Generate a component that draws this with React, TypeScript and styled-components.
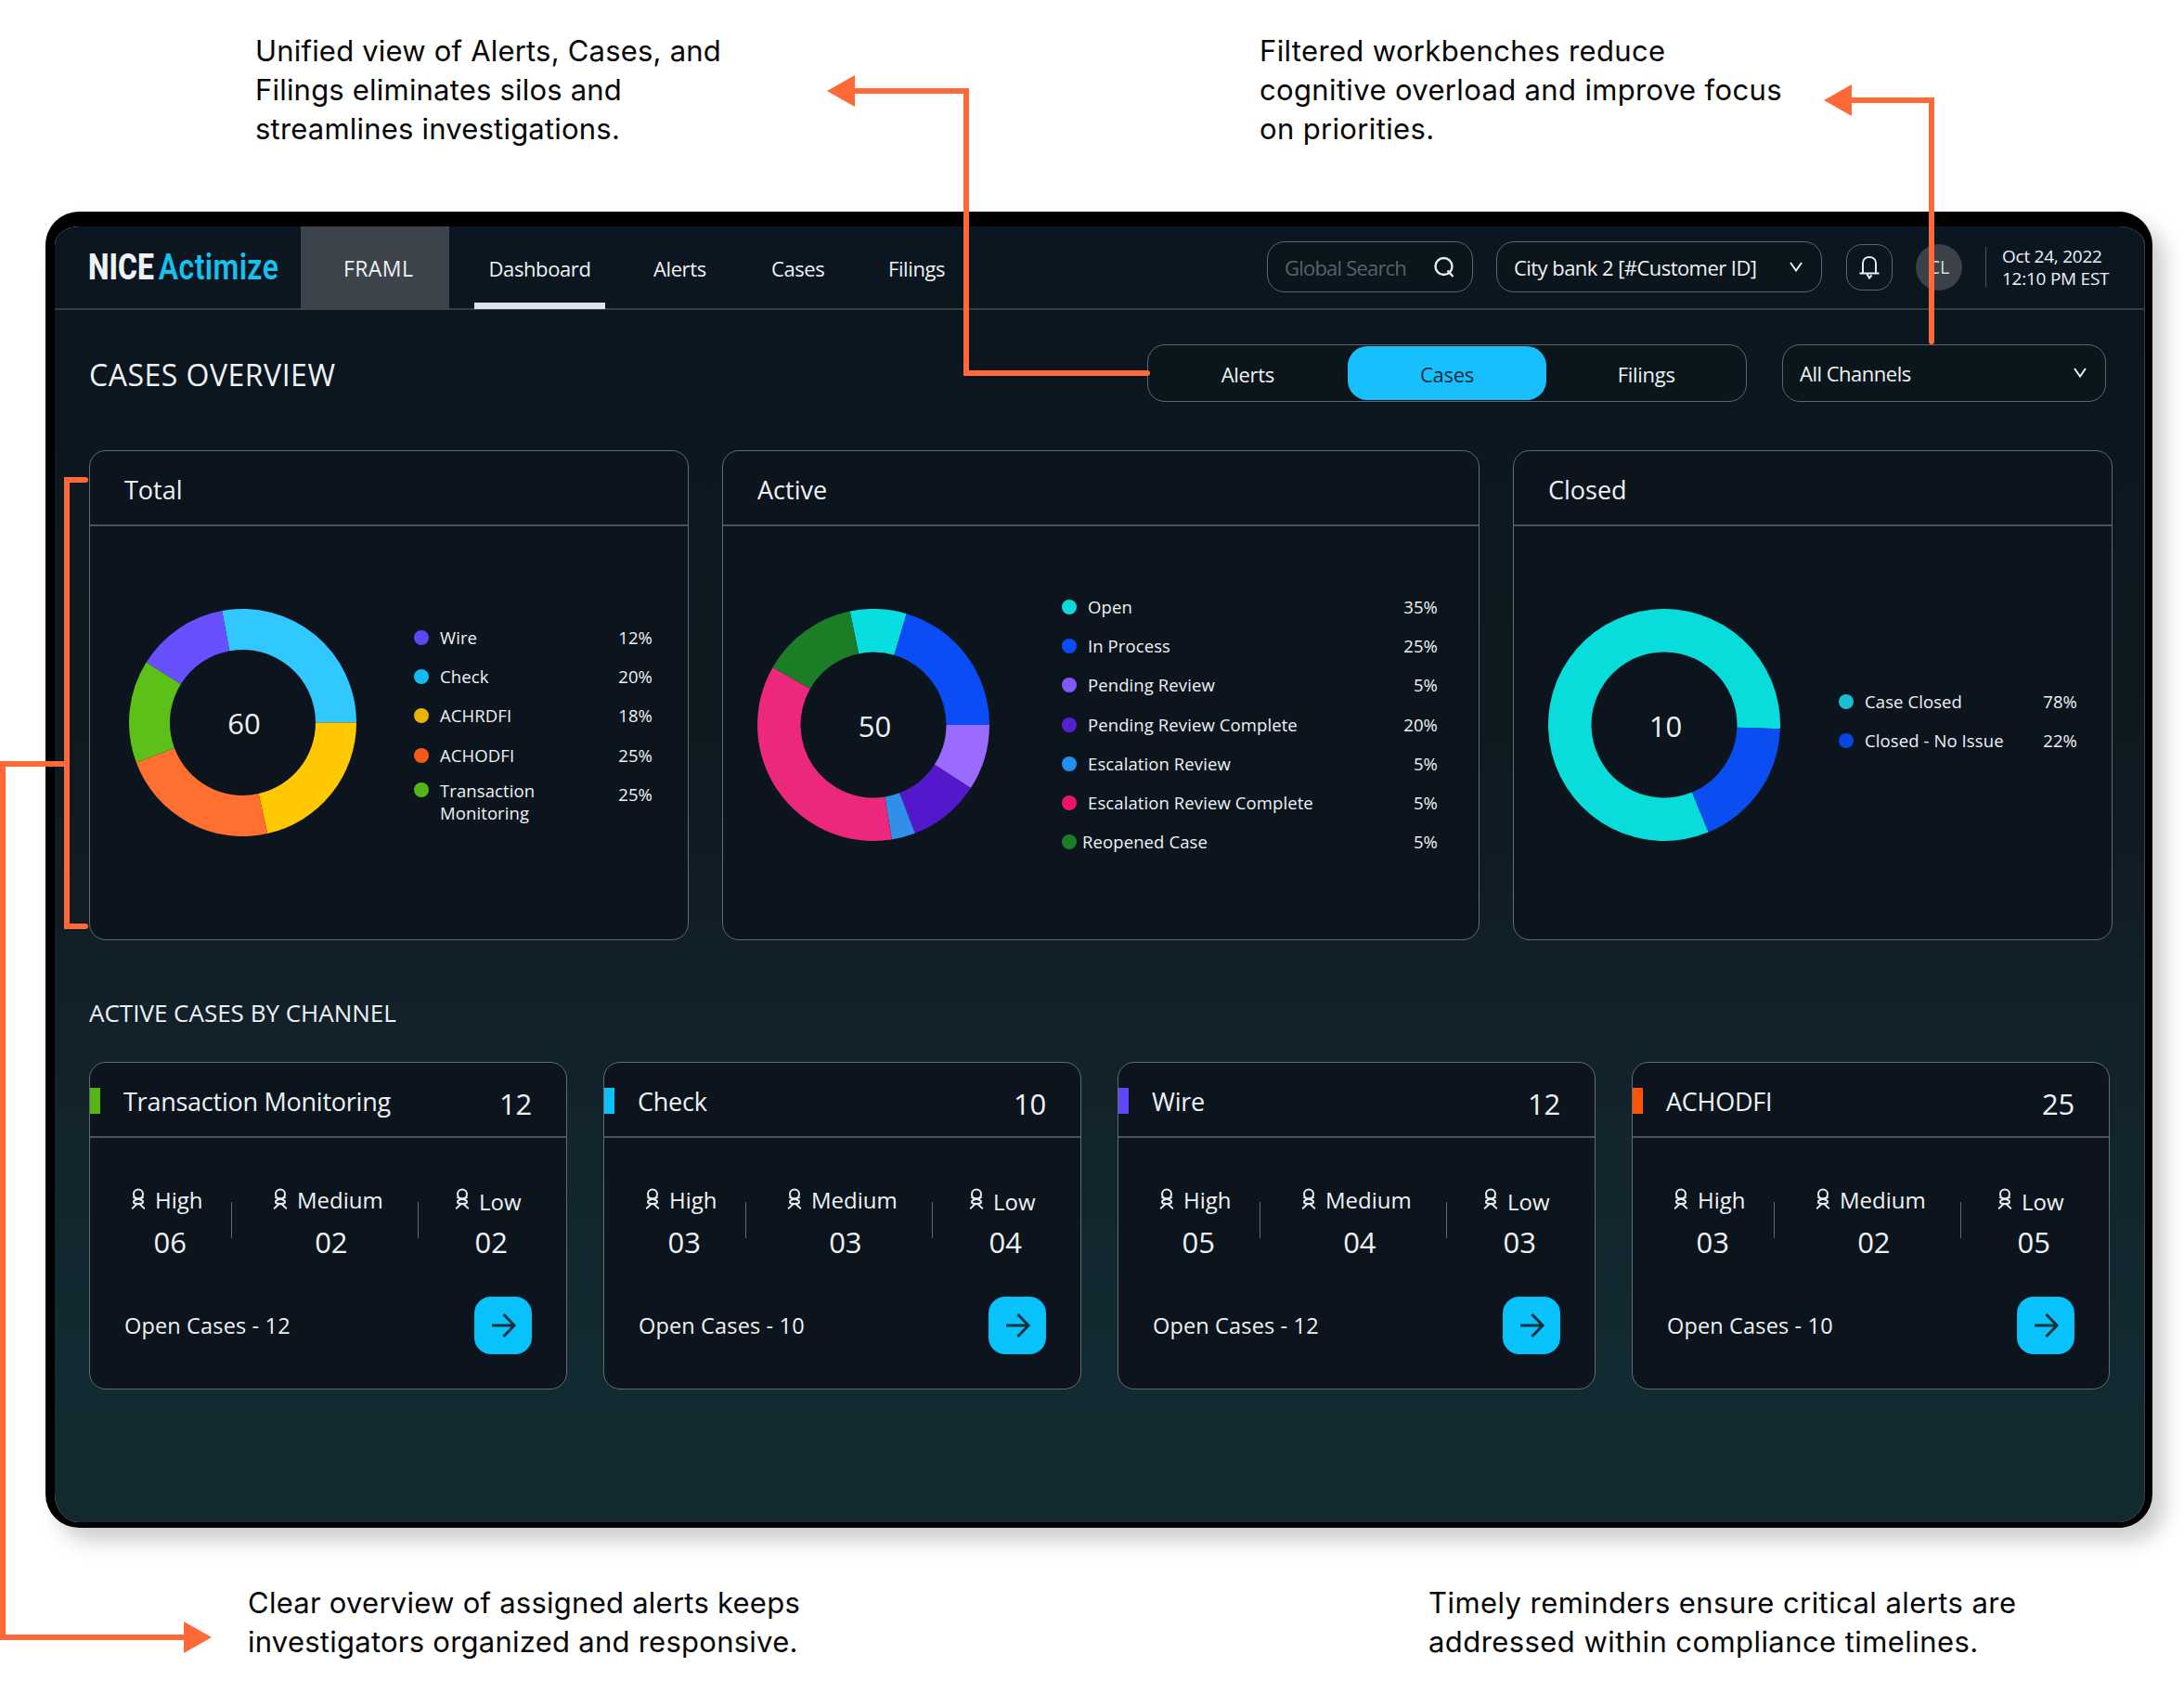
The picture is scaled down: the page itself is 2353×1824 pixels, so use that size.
import React, { useState } from "react";
import styled, { createGlobalStyle } from "styled-components";

const GlobalStyle = createGlobalStyle`
  * {
    box-sizing: border-box;
  }

  body {
    margin: 0;
    background: #fff;
    font-family: "Open Sans", "Noto Sans", sans-serif;
  }

  button {
    font: inherit;
    border: 0;
    padding: 0;
    background: none;
    color: inherit;
    cursor: pointer;
  }
`;

const Page = styled.div`
  position: relative;
  width: 2353px;
  height: 1824px;
  overflow: hidden;
  background: #fff;
`;

const CalloutRow = styled.div<{ $height: number; $top: number; $left: number }>`
  display: flex;
  height: ${({ $height }) => $height}px;
  padding: ${({ $top, $left }) => `${$top}px 0 0 ${$left}px`};
`;

const Callout = styled.p<{ $width: number; $spacing: number }>`
  width: ${({ $width }) => $width}px;
  margin: 0;
  color: #050505;
  font-family: Inter, sans-serif;
  font-size: 31px;
  line-height: 42px;
  letter-spacing: ${({ $spacing }) => $spacing}px;
  white-space: pre-line;
`;

const Frame = styled.div`
  width: 2270px;
  height: 1418px;
  margin-left: 49px;
  border: solid #000;
  border-width: 16px 8px 6px 10px;
  border-radius: 36px;
  background: linear-gradient(180deg, #0a1621 0%, #0c161e 10%, #0e1920 40%, #12212a 62%, #122a31 88%, #12292f 100%);
  background-clip: padding-box;
  box-shadow: 13px 14px 22px rgba(0, 0, 0, 0.2), inset -1px 0 0 #3a4247;
  color: #eef2f5;
`;

const Header = styled.header`
  display: flex;
  align-items: stretch;
  height: 90px;
  padding-left: 36px;
  padding-right: 39px;
  border-bottom: 2px solid #333d44;
`;

const Logo = styled.div`
  width: 229px;
  font-family: Roboto, sans-serif;
  font-size: 38px;
  font-weight: 800;
  line-height: 88px;
  white-space: nowrap;
`;

const LogoText = styled.div`
  transform: scaleX(0.84);
  transform-origin: left;

  span {
    margin-left: 6px;
    color: #16c1ee;
    font-weight: 600;
    letter-spacing: 0.5px;
  }
`;

const Product = styled.div`
  width: 160px;
  height: 90px;
  padding-left: 46px;
  background: #3d434b;
  font-size: 23px;
  line-height: 90px;
  letter-spacing: 0.4px;
`;

const Nav = styled.nav`
  display: flex;
  margin-left: 27px;
`;

const NavItem = styled.a<{ $width: number; $active?: boolean }>`
  width: ${({ $width }) => $width}px;
  height: 89px;
  margin-right: ${({ $active }) => ($active ? 52 : 0)}px;
  border-bottom: 7px solid ${({ $active }) => ($active ? "#dfe4ec" : "transparent")};
  font-size: 22px;
  line-height: 90px;
  letter-spacing: -0.4px;
  text-align: ${({ $active }) => ($active ? "center" : "left")};
`;

const Tools = styled.div`
  display: flex;
  align-items: center;
  height: 87px;
  margin-left: auto;
`;

const Field = styled.div<{ $width: number; $height: number; $spacing: number }>`
  display: flex;
  align-items: center;
  justify-content: space-between;
  width: ${({ $width }) => $width}px;
  height: ${({ $height }) => $height}px;
  padding: 0 19px 0 18px;
  border: 1px solid #5c676d;
  border-radius: 19px;
  background: #0b151c;
  font-size: 22px;
  letter-spacing: ${({ $spacing }) => $spacing}px;
  white-space: nowrap;

  & + & {
    margin-left: 25px;
  }
`;

const Placeholder = styled.span`
  color: #56626b;
`;

const BellButton = styled.button`
  display: grid;
  place-items: center;
  width: 50px;
  height: 50px;
  margin: 0 25px 0 26px;
  border: 1px solid #5c676d;
  border-radius: 17px;
`;

const Avatar = styled.div`
  width: 50px;
  height: 50px;
  border-radius: 50%;
  background: #3b4146;
  color: #d4d8db;
  font-size: 20px;
  line-height: 50px;
  text-align: center;
`;

const Timestamp = styled.div`
  width: 133px;
  height: 44px;
  margin-left: 25px;
  padding-left: 17px;
  border-left: 1px solid #4a545a;
  font-size: 19px;
  line-height: 24px;
  letter-spacing: -0.25px;
  white-space: nowrap;

  div:first-child {
    margin-top: -2px;
  }
`;

const Toolbar = styled.div`
  display: flex;
  align-items: center;
  height: 62px;
  margin: 37px 42px 0 37px;
`;

const Title = styled.h1`
  margin: 0 auto 0 0;
  padding-top: 2px;
  font-size: 32px;
  font-weight: 400;
  letter-spacing: 0.5px;
`;

const Tabs = styled.div`
  display: flex;
  align-items: center;
  width: 646px;
  height: 62px;
  margin-right: 38px;
  border: 1px solid #5c676d;
  border-radius: 19px;
  background: #0b151c;
`;

const Tab = styled.button<{ $active: boolean }>`
  flex: 1;
  height: 58px;
  padding-top: 2px;
  border-radius: 21px;
  background: ${({ $active }) => ($active ? "#17c0fd" : "transparent")};
  color: ${({ $active }) => ($active ? "#0d2a38" : "#eef2f5")};
  font-size: 22px;
  letter-spacing: -0.3px;
`;

const ChartGrid = styled.div`
  display: grid;
  grid-template-columns: 646px 816px 646px;
  gap: 36px;
  margin: 52px 0 0 37px;
`;

const Card = styled.section<{ $height: number }>`
  height: ${({ $height }) => $height}px;
  border: 1px solid #616c72;
  border-radius: 18px;
  background: #0c151d;
`;

const CardHeader = styled.div<{ $spacing?: number }>`
  display: flex;
  align-items: center;
  height: 81px;
  padding: 3px 37px 0;
  border-bottom: 2px solid #4a555b;
  font-size: 27px;
  letter-spacing: ${({ $spacing = 0 }) => $spacing}px;
`;

const ChartBody = styled.div<{ $left: number; $gap: number }>`
  display: flex;
  align-items: flex-start;
  gap: ${({ $gap }) => $gap}px;
  padding-left: ${({ $left }) => $left}px;
`;

const DonutBox = styled.div`
  position: relative;
  margin-top: 89px;

  svg {
    display: block;
  }
`;

const DonutValue = styled.div`
  position: absolute;
  inset: 1px 0 0 3px;
  display: grid;
  place-items: center;
  font-size: 31px;
`;

const Legend = styled.ul<{ $top: number; $width: number }>`
  width: ${({ $width }) => $width}px;
  margin: ${({ $top }) => $top}px 0 0;
  padding: 0;
  list-style: none;
`;

const LegendItem = styled.li<{ $tight?: boolean; $multiline?: boolean }>`
  display: grid;
  grid-template-columns: ${({ $tight }) => ($tight ? 22 : 28)}px 1fr auto;
  align-items: ${({ $multiline }) => ($multiline ? "start" : "center")};
  min-height: 42.2px;
  padding-top: ${({ $multiline }) => ($multiline ? 5 : 0)}px;
  font-size: 18.5px;
  line-height: 24px;
  letter-spacing: 0.1px;
  white-space: pre-line;
`;

const Dot = styled.span<{ $color: string; $multiline?: boolean }>`
  width: 16px;
  height: 16px;
  margin-top: ${({ $multiline }) => ($multiline ? 3 : 0)}px;
  border-radius: 50%;
  background: ${({ $color }) => $color};
`;

const Percent = styled.span<{ $multiline?: boolean }>`
  margin-top: ${({ $multiline }) => ($multiline ? 4 : 0)}px;
`;

const SectionTitle = styled.h2`
  height: 40px;
  margin: 58px 0 33px 37px;
  font-size: 26px;
  font-weight: 400;
  line-height: 40px;
  letter-spacing: 0;
`;

const ChannelGrid = styled.div`
  display: grid;
  grid-template-columns: repeat(4, 515px);
  column-gap: 39px;
  margin-left: 37px;
`;

const Marker = styled.span<{ $color: string }>`
  width: 11px;
  height: 28px;
  margin-left: -37px;
  margin-right: 25px;
  background: ${({ $color }) => $color};
`;

const Count = styled.span`
  margin-left: auto;
  padding-top: 6px;
  font-size: 31px;
`;

const Stats = styled.div`
  display: grid;
  grid-template-columns: 153px 201px 1fr;
  height: 116px;
  margin-top: 50px;
`;

const Stat = styled.div`
  position: relative;
  padding-left: 44px;

  & + &::before {
    content: "";
    position: absolute;
    left: -1px;
    top: 19px;
    width: 1px;
    height: 39px;
    background: #5f6a71;
  }

  &:last-child {
    padding-left: 39px;
  }
`;

const StatInner = styled.div`
  display: inline-block;
`;

const StatLabel = styled.div<{ $drop?: boolean }>`
  display: flex;
  align-items: flex-start;
  gap: 10px;
  height: 36px;
  font-size: 24px;
  line-height: 34px;

  span {
    margin-top: ${({ $drop }) => ($drop ? 2 : 0)}px;
  }

  svg {
    margin-top: 4px;
  }
`;

const StatValue = styled.div`
  padding-left: 7px;
  margin-top: 5px;
  font-size: 31px;
  line-height: 42px;
  text-align: center;
`;

const CardFooter = styled.div`
  display: flex;
  align-items: center;
  justify-content: space-between;
  height: 62px;
  margin-top: 5px;
  padding: 0 37px;
  font-size: 23.500px;
  letter-spacing: 0.15px;
`;

const OpenButton = styled.button`
  display: grid;
  place-items: center;
  width: 62px;
  height: 62px;
  border-radius: 18px;
  background: #08c2fc;
`;

const Arrows = styled.svg`
  position: absolute;
  inset: 0;
  pointer-events: none;
`;

type Slice = { from: number; to: number; color: string };
type LegendRow = { label: string; value: string; color: string; tight?: boolean };

type Chart = {
  title: string;
  total: number;
  size: number;
  left: number;
  gap: number;
  legendTop: number;
  legendWidth: number;
  slices: Slice[];
  legend: LegendRow[];
};

// slice angles are in degrees, clockwise from the top
const charts: Chart[] = [
  {
    title: "Total",
    total: 60,
    size: 245,
    left: 42,
    gap: 62,
    legendTop: 99,
    legendWidth: 257,
    slices: [
      { from: -10.5, to: 90, color: "#30c8ff" },
      { from: 90, to: 167.4, color: "#ffc800" },
      { from: 167.4, to: 249.5, color: "#ff7030" },
      { from: 249.5, to: 302, color: "#5cc018" },
      { from: 302, to: 349.5, color: "#6850ff" },
    ],
    legend: [
      { label: "Wire", value: "12%", color: "#5b48f5" },
      { label: "Check", value: "20%", color: "#12bcf2" },
      { label: "ACHRDFI", value: "18%", color: "#e8b208" },
      { label: "ACHODFI", value: "25%", color: "#f55a1a" },
      { label: "Transaction\nMonitoring", value: "25%", color: "#55b41a" },
    ],
  },
  {
    title: "Active",
    total: 50,
    size: 250,
    left: 37,
    gap: 78,
    legendTop: 66,
    legendWidth: 405,
    slices: [
      { from: -11.7, to: 16.6, color: "#08dedf" },
      { from: 16.6, to: 90, color: "#0a4cf5" },
      { from: 90, to: 123, color: "#9b6bff" },
      { from: 123, to: 159, color: "#5318cc" },
      { from: 159, to: 170.9, color: "#328fe8" },
      { from: 170.9, to: 299.8, color: "#eb287c" },
      { from: 299.8, to: 348.3, color: "#1b7d25" },
    ],
    legend: [
      { label: "Open", value: "35%", color: "#12d6d8" },
      { label: "In Process", value: "25%", color: "#0a4cf5" },
      { label: "Pending Review", value: "5%", color: "#7d5bf8" },
      { label: "Pending Review Complete", value: "20%", color: "#5520d0" },
      { label: "Escalation Review", value: "5%", color: "#2090f0" },
      { label: "Escalation Review Complete", value: "5%", color: "#ea146c" },
      { label: "Reopened Case", value: "5%", color: "#1b7d25", tight: true },
    ],
  },
  {
    title: "Closed",
    total: 10,
    size: 250,
    left: 37,
    gap: 63,
    legendTop: 168,
    legendWidth: 257,
    slices: [
      { from: -202.4, to: 92, color: "#08dddc" },
      { from: 92, to: 157.6, color: "#0a4ef2" },
    ],
    legend: [
      { label: "Case Closed", value: "78%", color: "#18bfd0" },
      { label: "Closed - No Issue", value: "22%", color: "#0a45e0" },
    ],
  },
];

const channels = [
  { name: "Transaction Monitoring", count: 12, color: "#52b415", stats: ["06", "02", "02"], open: 12 },
  { name: "Check", count: 10, color: "#0cc0fa", stats: ["03", "03", "04"], open: 10 },
  { name: "Wire", count: 12, color: "#6246fa", stats: ["05", "04", "03"], open: 12 },
  { name: "ACHODFI", count: 25, color: "#fc5508", stats: ["03", "02", "05"], open: 10 },
];

const levels = ["High", "Medium", "Low"];

function slicePath(from: number, to: number, c: number, outer: number, inner: number) {
  const point = (deg: number, r: number) => {
    const rad = (deg * Math.PI) / 180;
    return `${(c + r * Math.sin(rad)).toFixed(2)} ${(c - r * Math.cos(rad)).toFixed(2)}`;
  };
  const large = to - from > 180 ? 1 : 0;
  return [
    `M${point(from, outer)}`,
    `A${outer} ${outer} 0 ${large} 1 ${point(to, outer)}`,
    `L${point(to, inner)}`,
    `A${inner} ${inner} 0 ${large} 0 ${point(from, inner)}Z`,
  ].join(" ");
}

const Donut = ({ size, slices, total }: { size: number; slices: Slice[]; total: number }) => (
  <DonutBox>
    <svg width={size} height={size}>
      {slices.map((s) => (
        <path key={s.color} d={slicePath(s.from, s.to, size / 2, size / 2, 78.5)} fill={s.color} />
      ))}
    </svg>
    <DonutValue>{total}</DonutValue>
  </DonutBox>
);

const Chevron = () => (
  <svg width="16" height="12" viewBox="0 0 16 12" fill="none" stroke="#e8edf0" strokeWidth="2">
    <path d="M2 1 8 9.5 14 1" />
  </svg>
);

const SearchIcon = () => (
  <svg width="22" height="24" viewBox="0 0 22 24" fill="none" stroke="#e8edf0" strokeWidth="2.4">
    <circle cx="10.5" cy="11" r="9" />
    <path d="M14.5 15.5 20.5 22" />
  </svg>
);

const BellIcon = () => (
  <svg width="24" height="28" viewBox="0 0 24 28" fill="none" stroke="#e8edf0" strokeWidth="2">
    <path d="M5 20V9.500C5 5.500 8 3 12 3s7 2.500 7 6.500V20" />
    <path d="M1.500 20.500h21M9.500 21.500l2.500 4 2.500-3" />
  </svg>
);

const PersonIcon = () => (
  <svg width="16" height="23" viewBox="0 0 16 23" fill="none" stroke="#e8edf0" strokeWidth="2">
    <circle cx="8" cy="6.500" r="5" />
    <path d="M2.500 9.500C4.500 12.500 12 11 13 14.500c.5 2-2 2.500-5 2.500s-5.500-.5-5-2.500C4 11 11.500 12.500 13.500 9.500" />
    <path d="M1 22C4 21 4.500 17 8 17s4 4 7 5" />
  </svg>
);

const ArrowIcon = () => (
  <svg width="30" height="30" viewBox="0 0 30 30" fill="none" stroke="#12303c" strokeWidth="3">
    <path d="M3 15h24M15.500 3 27 15 15.500 27" />
  </svg>
);

export default function App() {
  const [tab, setTab] = useState("Cases");

  return (
    <Page>
      <GlobalStyle />

      <CalloutRow $height={228} $top={34} $left={275}>
        <Callout $width={1082} $spacing={0.2}>
          {"Unified view of Alerts, Cases, and\nFilings eliminates silos and\nstreamlines investigations."}
        </Callout>
        <Callout $width={700} $spacing={0.35}>
          {"Filtered workbenches reduce\ncognitive overload and improve focus\non priorities."}
        </Callout>
      </CalloutRow>

      <Frame>
        <Header>
          <Logo>
            <LogoText>NICE<span>Actimize</span></LogoText>
          </Logo>
          <Product>FRAML</Product>
          <Nav>
            <NavItem $width={141} $active>Dashboard</NavItem>
            <NavItem $width={127}>Alerts</NavItem>
            <NavItem $width={126}>Cases</NavItem>
            <NavItem $width={70}>Filings</NavItem>
          </Nav>
          <Tools>
            <Field $width={222} $height={55} $spacing={-0.8}>
              <Placeholder>Global Search</Placeholder>
              <SearchIcon />
            </Field>
            <Field $width={351} $height={55} $spacing={-0.55}>
              City bank 2 [#Customer ID]
              <Chevron />
            </Field>
            <BellButton><BellIcon /></BellButton>
            <Avatar>CL</Avatar>
            <Timestamp>
              <div>Oct 24, 2022</div>
              <div>12:10 PM EST</div>
            </Timestamp>
          </Tools>
        </Header>

        <Toolbar>
          <Title>CASES OVERVIEW</Title>
          <Tabs>
            {["Alerts", "Cases", "Filings"].map((name) => (
              <Tab key={name} $active={tab === name} onClick={() => setTab(name)}>{name}</Tab>
            ))}
          </Tabs>
          <Field as="div" $width={349} $height={62} $spacing={-0.5}>
            All Channels
            <Chevron />
          </Field>
        </Toolbar>

        <ChartGrid>
          {charts.map((chart) => (
            <Card key={chart.title} $height={528}>
              <CardHeader>{chart.title}</CardHeader>
              <ChartBody $left={chart.left} $gap={chart.gap}>
                <Donut size={chart.size} slices={chart.slices} total={chart.total} />
                <Legend $top={chart.legendTop} $width={chart.legendWidth}>
                  {chart.legend.map((row) => {
                    const multiline = row.label.includes("\n");
                    return (
                      <LegendItem key={row.label} $tight={row.tight} $multiline={multiline}>
                        <Dot $color={row.color} $multiline={multiline} />
                        <span>{row.label}</span>
                        <Percent $multiline={multiline}>{row.value}</Percent>
                      </LegendItem>
                    );
                  })}
                </Legend>
              </ChartBody>
            </Card>
          ))}
        </ChartGrid>

        <SectionTitle>ACTIVE CASES BY CHANNEL</SectionTitle>

        <ChannelGrid>
          {channels.map((channel) => (
            <Card key={channel.name} $height={353}>
              <CardHeader $spacing={-0.25}>
                <Marker $color={channel.color} />
                {channel.name}
                <Count>{channel.count}</Count>
              </CardHeader>
              <Stats>
                {levels.map((level, i) => (
                  <Stat key={level}>
                    <StatInner>
                      <StatLabel $drop={level === "Low"}>
                        <PersonIcon />
                        <span>{level}</span>
                      </StatLabel>
                      <StatValue>{channel.stats[i]}</StatValue>
                    </StatInner>
                  </Stat>
                ))}
              </Stats>
              <CardFooter>
                Open Cases - {channel.open}
                <OpenButton><ArrowIcon /></OpenButton>
              </CardFooter>
            </Card>
          ))}
        </ChannelGrid>
      </Frame>

      <CalloutRow $height={178} $top={60} $left={267}>
        <Callout $width={1272} $spacing={0.25}>
          {"Clear overview of assigned alerts keeps\ninvestigators organized and responsive."}
        </Callout>
        <Callout $width={760} $spacing={0.43}>
          {"Timely reminders ensure critical alerts are\naddressed within compliance timelines."}
        </Callout>
      </CalloutRow>

      <Arrows width="2353" height="1824" fill="none" stroke="#ff6937" strokeWidth="6" strokeLinecap="round">
        <path d="M1236 402H1041V98H918" />
        <path d="M2081 368V108H1992" />
        <path d="M92 517H72V998H92M72 823H3V1764H200" />
        <g fill="#ff6937" stroke="none">
          <path d="M891 98 921 81V115Z" />
          <path d="M1965 108 1995 91V125Z" />
          <path d="M228 1764 198 1747V1781Z" />
        </g>
      </Arrows>
    </Page>
  );
}
